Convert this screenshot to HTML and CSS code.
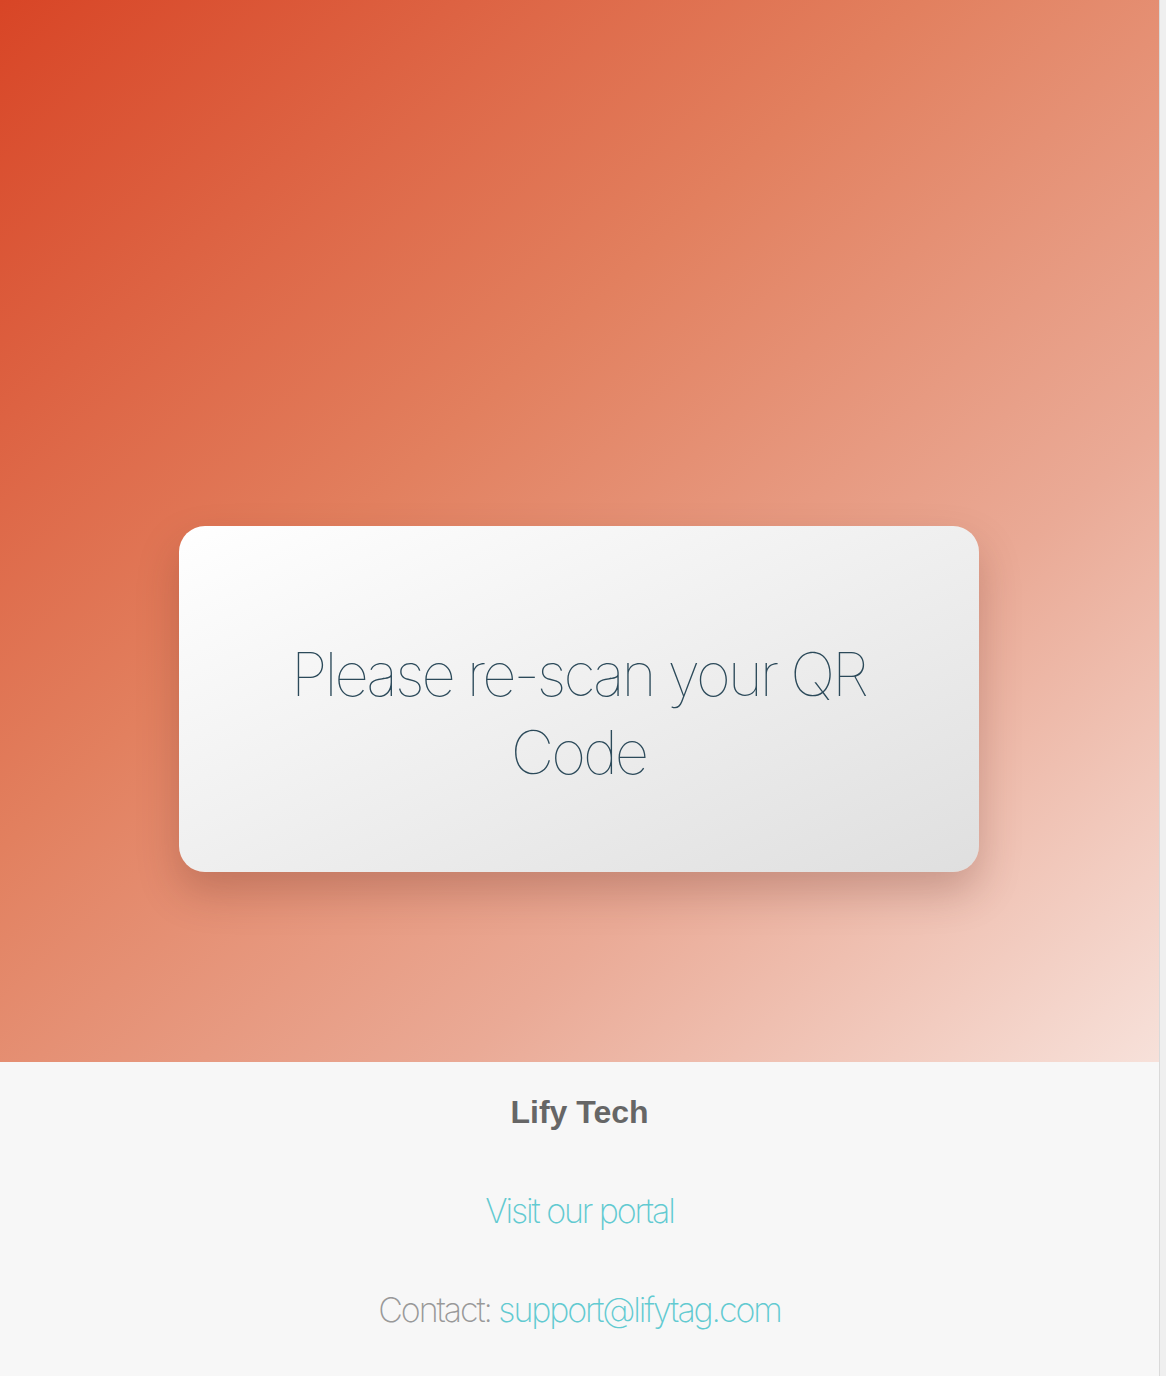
FILE: index.html
```html
<!DOCTYPE html>
<html lang="en">
<head>
  <meta charset="UTF-8">
  <meta name="viewport" content="width=device-width, initial-scale=1">
  <title>Lify Tech</title>
  <link rel="stylesheet" href="styles.css">
</head>
<body>
  <div class="page">
    <!-- Main block with the message -->
    <section class="hero">
      <div class="card">
        <h1 class="card-title">Please re-scan your QR Code</h1>
      </div>
    </section>

    <!-- Footer -->
    <footer class="footer">
      <h2 class="brand">Lify Tech</h2>
      <p class="footer-line"><a href="#" class="link">Visit our portal</a></p>
      <p class="footer-line">Contact: <a href="#" class="link">support@lifytag.com</a></p>
    </footer>
  </div>
  <div class="gutter"></div>
</body>
</html>
```

FILE: styles.css
```css
/* General */
html, body {
    margin: 0;
    padding: 0;
}

body {
    font-family: Inter, "Liberation Sans", sans-serif;
    display: flex;
    min-height: 1376px;
    background: #f7f7f7;
}

.page {
    flex: 1;
    display: flex;
    flex-direction: column;
}

.gutter {
    width: 6px;
    border-left: 1px solid #dadada;
    background: #efefef;
}

/* Hero */
.hero {
    height: 1062px;
    box-sizing: border-box;
    padding-top: 526px;
    padding-right: 2px;
    background: linear-gradient(to bottom right, #d84526 0%, #e2805f 40%, #eaaa96 70%, #f7e1da 100%);
    display: flex;
    justify-content: center;
    align-items: flex-start;
}

.card {
    width: 800px;
    height: 346px;
    box-sizing: border-box;
    padding: 28px 80px 0;
    border-radius: 26px;
    background: linear-gradient(to bottom right, #ffffff, #dfdfdf);
    box-shadow: 0 20px 40px rgba(90, 40, 30, 0.25);
    display: flex;
    align-items: center;
    justify-content: center;
}

.card-title {
    margin: 0;
    font-size: 60px;
    font-weight: 100;
    line-height: 78px;
    letter-spacing: -3px;
    color: #2c4a5a;
    text-align: center;
}

/* Footer */
.footer {
    flex: 1;
    background: #f7f7f7;
    text-align: center;
    padding-top: 28px;
}

.brand {
    margin: 0 0 54px;
    font-family: "Liberation Sans", Arial, sans-serif;
    font-size: 32px;
    font-weight: 700;
    line-height: 44px;
    color: #666666;
}

.footer-line {
    margin: 0 0 53px;
    font-size: 34px;
    font-weight: 200;
    line-height: 46px;
    letter-spacing: -2.1px;
    color: #999999;
}

.link {
    color: #62cad1;
    text-decoration: none;
}
```
